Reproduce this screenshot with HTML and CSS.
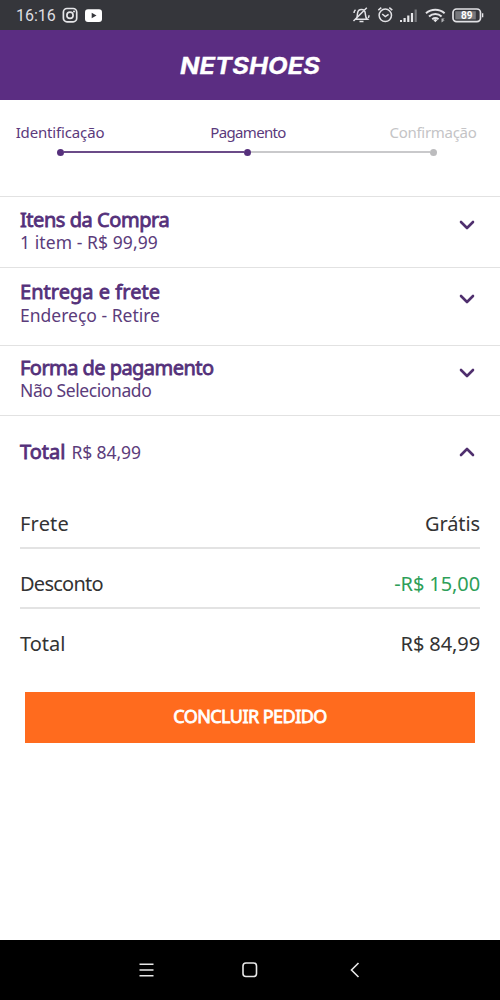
FILE: index.html
```html
<!DOCTYPE html>
<html lang="pt-BR">
<head>
<meta charset="utf-8">
<title>Netshoes - Pagamento</title>
<link rel="stylesheet" href="styles.css">
</head>
<body>
<div class="status">
  <span class="clock">16:16</span>
  <svg class="apps" width="42" height="18" viewBox="0 0 42 18">
    <g fill="none" stroke="#e6e6e9" stroke-width="1.7"><rect x="1.400" y="2.500" width="13.300" height="13.300" rx="3.600"/><circle cx="8" cy="9.200" r="3.100"/></g>
    <circle cx="12" cy="5.400" r="1" fill="#e6e6e9"/>
    <rect x="23" y="3.300" width="17" height="12.600" rx="3" fill="#fff"/><path d="M29.700 6.700v5.600l4.800-2.800z" fill="#35363b"/>
  </svg>
  <svg class="system" width="134" height="20" viewBox="0 0 134 20">
    <g fill="none" stroke="#e2e2e6" stroke-width="1.5">
      <path d="M3.800 14.300c1.800-1.300 1.300-3.400 1.700-5.900.4-2.800 2.100-3.800 3.900-3.800 2.900 0 3.900 2.200 4 4.800.1 2.400.5 3.700 2 4.900H3.800M7.500 16.400h4M1.500 16 14.800 2.800M2 8c0-1.500.7-2.500 1.500-3.200M16.200 13c.6-.8.8-1.800.8-2.800"/>
      <circle cx="33.300" cy="10.300" r="6.200"/><path d="m30.200 9 3.100 2.600 3.300-2.300M26.300 5.200l3-2.500M40.300 5.200l-3-2.500"/>
      <path d="M74 8.200c5.400-4.700 13.200-4.700 18.600 0M77 11.400c3.700-3.200 9-3.200 12.600 0M80.200 14.200c1.900-1.500 4.400-1.500 6.300 0" stroke-width="2"/>
      <rect x="101" y="4" width="27.500" height="12.600" rx="3.600" stroke-width="1.700"/>
    </g>
    <path d="M48 15h2v2h-2zm3.500-2h2.200v4h-2.200zm3.700-2.500h2.200V17h-2.200zm3.700-2.500h2.200v9h-2.200zM83.300 14l-2 1 2 2.200 2.200-2.200zM130 8.200h1.300v4H130z" fill="#e6e6e9"/>
    <path d="M62.600 4.500h2.200V17h-2.200z" fill="#77787c"/>
    <path d="M89.500 13.500h3.200l-1.900 1.700h2l-3.300 2.300z" fill="#b4b4b8"/>
    <rect x="103.300" y="6.200" width="20.500" height="8.200" fill="#77787c"/>
    <text x="114.800" y="14" text-anchor="middle" class="battery">89</text>
  </svg>
</div>
<header class="brand">
  <svg width="150" height="30" viewBox="0 0 150 30"><text class="logo" x="5" y="23.500" textLength="140" lengthAdjust="spacingAndGlyphs">NETSHOES</text></svg>
</header>
<nav class="steps">
  <div class="step"><span class="label first">Identificação</span></div>
  <div class="step"><span class="label second">Pagamento</span></div>
  <div class="step pending"><span class="label third">Confirmação</span></div>
  <div class="track"><i class="dot"></i><i class="bar"></i><i class="dot"></i><i class="bar off"></i><i class="dot off"></i></div>
</nav>
<main>
  <section class="panel items">
    <div><h2>Itens da Compra</h2><p class="price">1 item - R$ 99,99</p></div>
    <svg class="chevron" width="16" height="12" viewBox="0 0 16 12"><path d="m2 3 6 6 6-6"/></svg>
  </section>
  <section class="panel delivery">
    <div><h2>Entrega e frete</h2><p>Endereço - Retire</p></div>
    <svg class="chevron" width="16" height="12" viewBox="0 0 16 12"><path d="m2 3 6 6 6-6"/></svg>
  </section>
  <section class="panel method">
    <div><h2>Forma de pagamento</h2><p>Não Selecionado</p></div>
    <svg class="chevron" width="16" height="12" viewBox="0 0 16 12"><path d="m2 3 6 6 6-6"/></svg>
  </section>
  <section class="panel total">
    <div class="sum"><h2>Total</h2><p>R$ 84,99</p></div>
    <svg class="chevron" width="16" height="12" viewBox="0 0 16 12"><path d="m2 9 6-6 6 6"/></svg>
  </section>
  <dl class="summary">
    <div class="row"><dt class="shipping">Frete</dt><dd>Grátis</dd></div>
    <div class="row"><dt class="rebate">Desconto</dt><dd class="discount">-R$ 15,00</dd></div>
    <div class="row"><dt>Total</dt><dd>R$ 84,99</dd></div>
  </dl>
  <button class="submit"><span>CONCLUIR PEDIDO</span></button>
</main>
<footer class="navbar">
  <svg width="16" height="16" viewBox="0 0 16 16"><path d="M1.500 2.200h14M1.500 8h14M1.500 13.800h14"/></svg>
  <svg width="16" height="16" viewBox="0 0 16 16"><rect x="1" y="1" width="13.500" height="13.500" rx="3"/></svg>
  <svg width="16" height="16" viewBox="0 0 16 16"><path d="m12.500 1-7 7 7 7"/></svg>
</footer>
</body>
</html>
```
FILE: styles.css
```css
* { box-sizing: border-box; margin: 0; padding: 0; }
body { width: 500px; height: 1000px; display: flex; flex-direction: column; background: #fff; color: #333; font-family: "Noto Sans", "Open Sans", sans-serif; overflow: hidden; }
.status { height: 30px; background: #35363b; display: flex; align-items: center; padding: 0 14px 0 16px; }
.clock { font: 16px/30px Roboto, sans-serif; color: #dedee2; width: 39px; padding-top: 2px; }
.apps { margin-left: 7px; }
.system { margin-left: auto; }
.battery { font: 700 10px Roboto, sans-serif; fill: #fff; }
.brand { height: 70px; background: #5b2d82; display: flex; align-items: center; justify-content: center; }
.logo { font: italic 700 22.5px Inter, sans-serif; fill: #fff; stroke: #fff; stroke-width: .3px; }
.steps { height: 96px; padding-top: 22px; display: grid; grid-template-columns: 120px 256px 114px; grid-template-rows: 20px 20px; color: #5b3a7c; font-size: 15px; line-height: 20px; }
.step { text-align: center; white-space: nowrap; }
.first { letter-spacing: -.15px; }
.second { letter-spacing: -.65px; }
.third { letter-spacing: -.3px; }
.pending { color: #c4c4c6; }
.track { grid-column: 1 / 4; padding: 0 53px 0 57px; display: flex; align-items: center; }
.dot { width: 7px; height: 7px; border-radius: 50%; background: #56307c; }
.bar { flex: 1; height: 2px; background: #6b4b88; }
.dot.off { background: #bcbcbe; }
.bar.off { background: #c9c9cb; }
.panel { border-top: 1px solid #e2e2e2; padding: 0 25px 0 20px; display: flex; justify-content: space-between; color: #54307a; }
.panel h2 { font-size: 20px; line-height: 23px; font-weight: 400; -webkit-text-stroke: .8px currentColor; white-space: nowrap; }
.panel p { font-size: 17.5px; line-height: 22px; white-space: nowrap; color: #5b3c7b; }
.panel .price { letter-spacing: .08px; }
.chevron path { fill: none; stroke: #4f2f6e; stroke-width: 2.6; stroke-linecap: round; stroke-linejoin: round; }
.items { height: 71px; padding-top: 11px; }
.items h2 { letter-spacing: -.45px; }
.items .chevron { margin-top: 11px; }
.delivery { height: 78px; padding-top: 12px; }
.delivery h2 { margin-bottom: 1px; letter-spacing: .03px; }
.delivery .chevron { margin-top: 13px; }
.method { height: 70px; padding-top: 11px; }
.method h2 { line-height: 22px; letter-spacing: -.55px; }
.method p { letter-spacing: -.42px; }
.method .chevron { margin-top: 10px; }
.total { height: 79px; padding-top: 24px; }
.total .chevron { margin-top: 6px; }
.sum { display: flex; align-items: baseline; gap: 6px; }
.total p { letter-spacing: -.1px; }
.summary { padding: 0 20px; font-size: 20px; }
.row { height: 60px; padding-top: 13px; display: flex; justify-content: space-between; line-height: 34px; }
.row + .row { border-top: 2px solid #e3e3e3; padding-top: 18px; }
.row:first-child { height: 53px; }
.row dd { letter-spacing: -.1px; }
.shipping { letter-spacing: .2px; }
.rebate { letter-spacing: -.75px; }
.row .discount { color: #2e9f59; }
.submit { display: block; width: 450px; height: 51px; margin: 25px 0 0 25px; padding-bottom: 2px; border: 0; background: #ff6b1e; color: #fff; font: 400 18px/49px "Noto Sans", sans-serif; letter-spacing: -.55px; -webkit-text-stroke: .8px #fff; }
.navbar { height: 60px; margin-top: auto; background: #000; display: flex; justify-content: center; gap: 88px; align-items: center; }
.navbar svg { fill: none; stroke: #e8e8e8; stroke-width: 1.6; }
```
